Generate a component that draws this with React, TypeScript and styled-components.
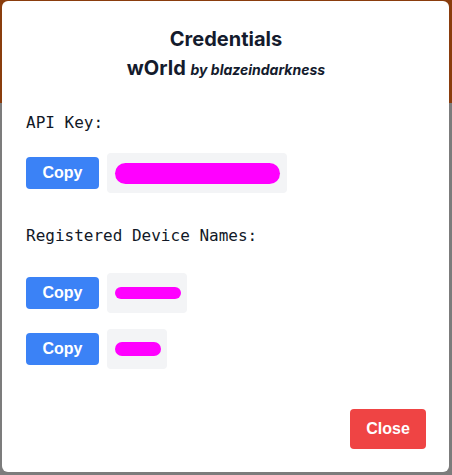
import React from "react";
import styled, { createGlobalStyle } from "styled-components";

const Global = createGlobalStyle`
  html, body { margin: 0; padding: 0; }
  body {
    width: 452px;
    height: 475px;
    overflow: hidden;
    background: linear-gradient(to bottom, #8a3d0d 0px, #8a3d0d 103px, #7c7c7c 103px, #7c7c7c 100%);
  }
`;

const Backdrop = styled.div`
  width: 452px;
  height: 475px;
  box-sizing: border-box;
  padding: 1px 3px 3px 2px;
  display: flex;
`;

const Modal = styled.div`
  flex: 1;
  background: #ffffff;
  border-radius: 6px;
  box-sizing: border-box;
  padding: 24px 23px 23px 24px;
  display: flex;
  flex-direction: column;
  color: #111827;
`;

const Title = styled.h2`
  margin: 0;
  text-align: center;
  font-family: Inter, "Liberation Sans", sans-serif;
  font-weight: 700;
  font-size: 20px;
  line-height: 28px;
  color: #141b2d;
`;

const Subtitle = styled.div`
  margin-top: 1px;
  text-align: center;
  font-family: Inter, "Liberation Sans", sans-serif;
  font-weight: 700;
  font-size: 20px;
  line-height: 28px;
  color: #141b2d;
`;

const By = styled.span`
  font-style: italic;
  font-size: 14px;
  font-weight: 700;
`;

const Label = styled.div<{ $top: number; $bottom: number }>`
  margin-top: ${(p) => p.$top}px;
  margin-bottom: ${(p) => p.$bottom}px;
  font-family: "DejaVu Sans Mono", "Liberation Mono", monospace;
  font-size: 16px;
  line-height: 24px;
  color: #111827;
`;

const List = styled.div`
  display: flex;
  flex-direction: column;
  gap: 16px;
`;

const Row = styled.div`
  display: flex;
  align-items: center;
  gap: 8px;
`;

const CopyButton = styled.button`
  width: 73px;
  height: 32px;
  border: none;
  border-radius: 4px;
  background: #3b82f6;
  color: #ffffff;
  font-family: "Liberation Sans", Arial, sans-serif;
  font-weight: 700;
  font-size: 16px;
  padding: 0;
  cursor: pointer;
`;

const ValueBox = styled.div<{ $w: number }>`
  width: ${(p) => p.$w}px;
  height: 40px;
  box-sizing: border-box;
  background: #f3f4f6;
  border-radius: 4px;
  padding: 0 6px 0 8px;
  display: flex;
  align-items: center;
  font-family: "DejaVu Sans Mono", "Liberation Mono", monospace;
`;

const Redacted = styled.span<{ $w: number; $h: number }>`
  display: block;
  width: ${(p) => p.$w}px;
  height: ${(p) => p.$h}px;
  background: #ff00ff;
  border-radius: ${(p) => p.$h / 2}px;
`;

const Footer = styled.div`
  margin-top: auto;
  display: flex;
  justify-content: flex-end;
`;

const CloseButton = styled.button`
  width: 76px;
  height: 40px;
  border: none;
  border-radius: 4px;
  background: #ef4444;
  color: #ffffff;
  font-family: "Liberation Sans", Arial, sans-serif;
  font-weight: 700;
  font-size: 16px;
  padding: 0;
  cursor: pointer;
`;

const devices = [
  { box: 80, w: 68, h: 12 },
  { box: 60, w: 48, h: 14 },
];

export default function App() {
  return (
    <>
      <Global />
      <Backdrop>
        <Modal>
          <Title>Credentials</Title>
          <Subtitle>
            wOrld <By>by blazeindarkness</By>
          </Subtitle>
          <Label $top={27} $bottom={18}>API Key:</Label>
          <List>
            <Row>
              <CopyButton>Copy</CopyButton>
              <ValueBox $w={180}>
                <Redacted $w={165} $h={21} />
              </ValueBox>
            </Row>
          </List>
          <Label $top={31} $bottom={25}>Registered Device Names:</Label>
          <List>
            {devices.map((d, i) => (
              <Row key={i}>
                <CopyButton>Copy</CopyButton>
                <ValueBox $w={d.box}>
                  <Redacted $w={d.w} $h={d.h} />
                </ValueBox>
              </Row>
            ))}
          </List>
          <Footer>
            <CloseButton>Close</CloseButton>
          </Footer>
        </Modal>
      </Backdrop>
    </>
  );
}
